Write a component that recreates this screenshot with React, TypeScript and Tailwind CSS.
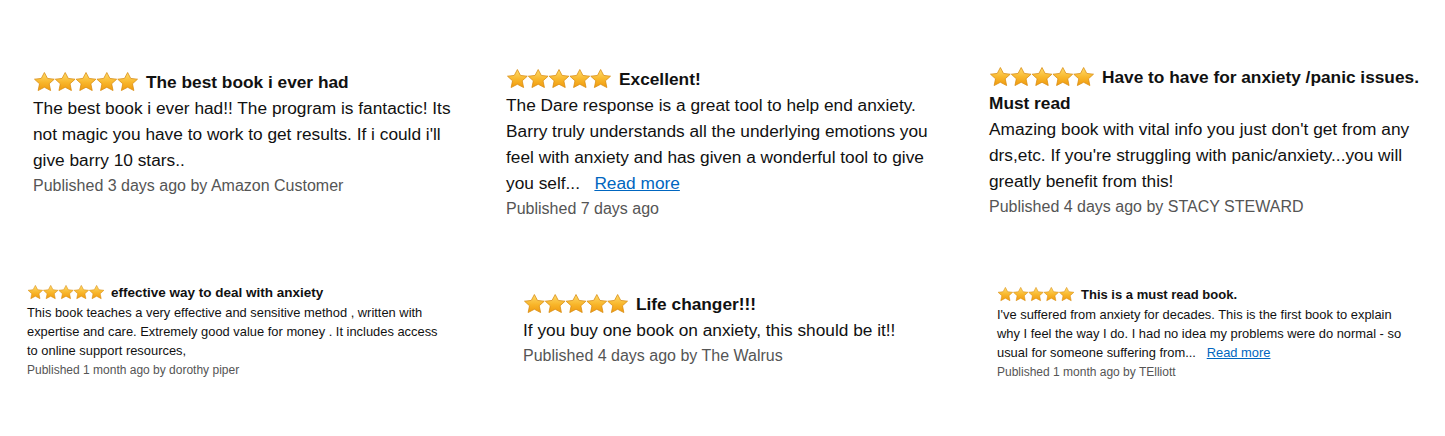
import React from 'react';

const font = { fontFamily: '"Liberation Sans", Arial, sans-serif' };

const Stars = ({ size }: { size: number }) => (
  <svg width={size * 5} height={size * 0.9} viewBox="0 0 120 22" className="shrink-0">
    <defs>
      <linearGradient id="starFill" x1="0" y1="0" x2="0" y2="1">
        <stop offset="0%" stopColor="#ffdc6b" />
        <stop offset="55%" stopColor="#f8b62b" />
        <stop offset="100%" stopColor="#f09a0e" />
      </linearGradient>
    </defs>
    {[0, 1, 2, 3, 4].map((i) => (
      <polygon
        key={i}
        transform={`translate(${i * 24} 0)`}
        points="12,0.6 15.6,7.4 23.4,8.3 17.6,13.6 19.2,21.4 12,17.6 4.8,21.4 6.4,13.6 0.6,8.3 8.4,7.4"
        fill="url(#starFill)"
        stroke="#d98d12"
        strokeWidth="0.9"
        strokeLinejoin="round"
      />
    ))}
  </svg>
);

type Review = {
  title: string;
  body: string;
  meta: string;
  more?: boolean;
};

const BigCard = ({ r, className }: { r: Review; className: string }) => (
  <div className={`text-[17.3px] leading-[26px] text-[#111] ${className}`} style={font}>
    <div>
      <span className="inline-flex align-[-3px] mr-[7px]">
        <Stars size={21.2} />
      </span>
      <span className="font-bold">{r.title}</span>
    </div>
    <p>
      {r.body}
      {r.more && (
        <>
          {'\u00a0\u00a0 '}
          <a href="#" className="text-[#0066c0] underline">
            Read more
          </a>
        </>
      )}
    </p>
    <p className="text-[16px] text-[#555]">{r.meta}</p>
  </div>
);

const SmallCard = ({
  r,
  className,
  titleSize,
  bodySize,
}: {
  r: Review;
  className: string;
  titleSize: string;
  bodySize: string;
}) => (
  <div className={`leading-[19px] text-[#111] ${bodySize} ${className}`} style={font}>
    <div className={`flex items-center ${titleSize}`}>
      <span className="mr-[6px] flex">
        <Stars size={15.6} />
      </span>
      <span className="font-bold">{r.title}</span>
    </div>
    <p className="mt-[1px]">
      {r.body}
      {r.more && (
        <>
          {'\u00a0\u00a0 '}
          <a href="#" className="text-[#0066c0] underline">
            Read more
          </a>
        </>
      )}
    </p>
    <p className="mt-[1px] text-[12px] text-[#555]">{r.meta}</p>
  </div>
);

export default function App() {
  return (
    <div className="w-[1445px] h-[436px] bg-white overflow-hidden flex flex-col">
      {/* Top row */}
      <div className="flex items-start h-[282px] pt-[64px]">
        <div className="w-[506px] pl-[33px] pt-[5px]">
          <BigCard
            className="w-[428px]"
            r={{
              title: 'The best book i ever had',
              body: "The best book i ever had!! The program is fantactic! Its not magic you have to work to get results. If i could i'll give barry 10 stars..",
              meta: 'Published 3 days ago by Amazon Customer',
            }}
          />
        </div>
        <div className="w-[483px] pt-[2px]">
          <BigCard
            className="w-[432px]"
            r={{
              title: 'Excellent!',
              body: 'The Dare response is a great tool to help end anxiety. Barry truly understands all the underlying emotions you feel with anxiety and has given a wonderful tool to give you self...',
              meta: 'Published 7 days ago',
              more: true,
            }}
          />
        </div>
        <div className="flex-1">
          <BigCard
            className="w-[438px]"
            r={{
              title: 'Have to have for anxiety /panic issues. Must read',
              body: "Amazing book with vital info you just don't get from any drs,etc. If you're struggling with panic/anxiety...you will greatly benefit from this!",
              meta: 'Published 4 days ago by STACY STEWARD',
            }}
          />
        </div>
      </div>

      {/* Bottom row */}
      <div className="flex items-start">
        <div className="w-[523px] pl-[27px] pt-[1px]">
          <SmallCard
            className="w-[420px]"
            titleSize="text-[13.5px]"
            bodySize="text-[12.9px]"
            r={{
              title: 'effective way to deal with anxiety',
              body: 'This book teaches a very effective and sensitive method , written with expertise and care. Extremely good value for money . It includes access to online support resources,',
              meta: 'Published 1 month ago by dorothy piper',
            }}
          />
        </div>
        <div className="w-[474px] pt-[9px]">
          <BigCard
            className="w-[430px]"
            r={{
              title: 'Life changer!!!',
              body: 'If you buy one book on anxiety, this should be it!!',
              meta: 'Published 4 days ago by The Walrus',
            }}
          />
        </div>
        <div className="flex-1 pt-[3px]">
          <SmallCard
            className="w-[408px]"
            titleSize="text-[13px]"
            bodySize="text-[12.9px]"
            r={{
              title: 'This is a must read book.',
              body: "I've suffered from anxiety for decades. This is the first book to explain why I feel the way I do. I had no idea my problems were do normal - so usual for someone suffering from...",
              meta: 'Published 1 month ago by TElliott',
              more: true,
            }}
          />
        </div>
      </div>
    </div>
  );
}
